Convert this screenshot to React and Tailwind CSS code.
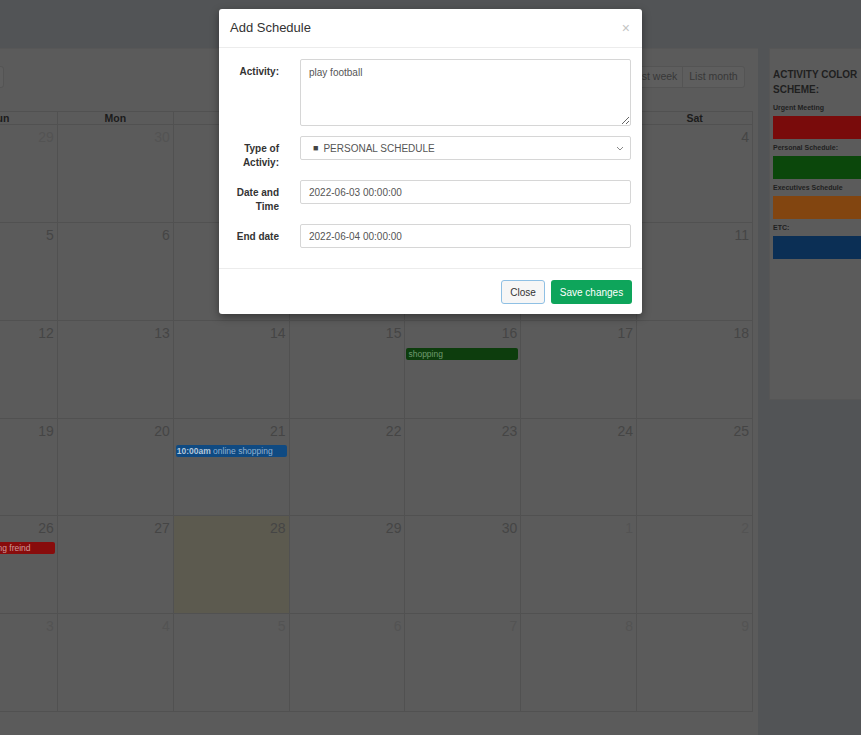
const weeks = [
  [[29, 0], [30, 0], [31, 0], [1, 1], [2, 1], [3, 1], [4, 1]],
  [[5, 1], [6, 1], [7, 1], [8, 1], [9, 1], [10, 1], [11, 1]],
  [[12, 1], [13, 1], [14, 1], [15, 1], [16, 1], [17, 1], [18, 1]],
  [[19, 1], [20, 1], [21, 1], [22, 1], [23, 1], [24, 1], [25, 1]],
  [[26, 1], [27, 1], [28, 1], [29, 1], [30, 1], [1, 0], [2, 0]],
  [[3, 0], [4, 0], [5, 0], [6, 0], [7, 0], [8, 0], [9, 0]],
];

const days = ["Sun", "Mon", "Tue", "Wed", "Thu", "Fri", "Sat"];

function EventBar({ r, c }) {
  if (r === 2 && c === 4)
    return (
      <div className="mt-[7px] ml-[1px] mr-[2px] h-[12px] rounded-[2px] bg-[#0d3d0d] px-[2px] text-[8.5px] leading-[12px] text-[#6f9a6f] whitespace-nowrap overflow-hidden">
        shopping
      </div>
    );
  if (r === 3 && c === 2)
    return (
      <div className="mt-[6px] ml-[2px] mr-[2px] h-[12px] rounded-[2px] bg-[#0f4a82] px-[1px] text-[8.5px] leading-[12px] text-[#8fb0d0] whitespace-nowrap overflow-hidden">
        <span className="font-bold text-[#b4c7da]">10:00am</span> online shopping
      </div>
    );
  if (r === 4 && c === 0)
    return (
      <div className="mt-[6px] ml-[2px] mr-[2px] h-[12px] rounded-[2px] bg-[#880c0c] px-[1px] text-[8.5px] leading-[12px] text-[#cf9a9a] whitespace-nowrap overflow-hidden">
        <span className="font-bold">9:00am</span> meeting freind
      </div>
    );
  return null;
}

function Field({ label, children }) {
  return (
    <div className="flex gap-[21px] mb-[10px]">
      <div className="w-[49px] shrink-0 text-right pt-[6px] text-[10px] font-bold leading-[14px] text-[#333]">
        {label}
      </div>
      <div className="flex-1">{children}</div>
    </div>
  );
}

export default function App() {
  return (
    <div className="relative w-[861px] h-[735px] overflow-hidden bg-[#525456] font-['Liberation_Sans',Arial,sans-serif]">
      <div className="flex pt-[48px]">
        {/* calendar card */}
        <div className="ml-[-64px] w-[822px] shrink-0 h-[720px] bg-[#5b5b5b] border-t border-[#575757] pt-[17px] px-[5px]">
          <div className="flex items-center justify-between h-[22px]">
            <div className="w-[63px] h-[22px] rounded-[3px] border border-[#545454] bg-[#5e5e5e]"></div>
            <div className="text-[16px] text-[#3a3a3a]">June 2022</div>
            <div className="flex mr-[8px] h-[22px] rounded-[3px] border border-[#545454] bg-[#5e5e5e] text-[10.5px] text-[#383838]">
              <div className="w-[54px] flex items-center justify-center border-r border-[#545454]">List week</div>
              <div className="w-[61px] flex items-center justify-center">List month</div>
            </div>
          </div>
          <div className="mt-[23px] w-[812px]">
            <div className="grid grid-cols-7 h-[14px] border-t border-l border-b border-[#515151]">
              {days.map((d) => (
                <div key={d} className="border-r border-[#515151] text-center text-[10.5px] font-bold leading-[12px] text-[#1c1c1c]">
                  {d}
                </div>
              ))}
            </div>
            <div className="grid grid-cols-7 grid-rows-6 h-[587px] border-l border-[#515151]">
              {weeks.map((w, r) =>
                w.map(([n, cur], c) => (
                  <div
                    key={r + "-" + c}
                    className={
                      "border-r border-b border-[#515151] min-w-0 " +
                      (r === 4 && c === 2 ? "bg-[#5c5a4f]" : "")
                    }
                  >
                    <div
                      className={
                        "text-right pr-[3px] pt-[4px] text-[14px] leading-[16px] " +
                        (cur ? "text-[#454545]" : "text-[#535353]")
                      }
                    >
                      {n}
                    </div>
                    <EventBar r={r} c={c} />
                  </div>
                ))
              )}
            </div>
          </div>
        </div>
        {/* sidebar */}
        <div className="ml-[11px] w-[110px] shrink-0 h-[352px] bg-[#5b5b5b] border border-[#565656] pt-[18px] px-[3px]">
          <div className="text-[10px] font-bold leading-[15px] text-[#1f1f1f]">
            ACTIVITY COLOR
            <br />
            SCHEME:
          </div>
          <div className="mt-[6px] text-[7px] font-bold leading-[9px] text-[#1f1f1f]">Urgent Meeting</div>
          <div className="mt-[4px] h-[23px] bg-[#790b0b]"></div>
          <div className="mt-[4px] text-[7px] font-bold leading-[9px] text-[#1f1f1f]">Personal Schedule:</div>
          <div className="mt-[4px] h-[23px] bg-[#0b470b]"></div>
          <div className="mt-[4px] text-[7px] font-bold leading-[9px] text-[#1f1f1f]">Executives Schedule</div>
          <div className="mt-[4px] h-[23px] bg-[#824510]"></div>
          <div className="mt-[4px] text-[7px] font-bold leading-[9px] text-[#1f1f1f]">ETC:</div>
          <div className="mt-[4px] h-[23px] bg-[#0b2f55]"></div>
        </div>
      </div>

      {/* modal */}
      <div className="absolute left-[219px] top-[9px] w-[423px] rounded-[3px] bg-white shadow-[0_3px_9px_rgba(0,0,0,0.4)]">
        <div className="flex items-center justify-between h-[39px] border-b border-[#ececec] pl-[11px] pr-[12px]">
          <div className="text-[13px] text-[#333]">Add Schedule</div>
          <div className="text-[14px] leading-none text-[#c4c4c4]">×</div>
        </div>
        <div className="pt-[11px] pb-[10px] px-[11px]">
          <Field label="Activity:">
            <textarea
              readOnly
              value="play football"
              className="block w-full h-[67px] rounded-[2px] border border-[#d6d6d6] px-[8px] pt-[6px] text-[10px] leading-[14px] text-[#555] outline-none font-['Liberation_Sans',Arial,sans-serif]"
            />
          </Field>
          <Field label="Type of Activiy:">
            <div className="flex items-center justify-between h-[24px] rounded-[2px] border border-[#d6d6d6] pl-[12px] pr-[6px] text-[10px] text-[#555]">
              <div className="flex items-center">
                <span className="text-[9px] leading-none text-[#444] mr-[5px]">■</span>
                <span>PERSONAL SCHEDULE</span>
              </div>
              <svg width="8" height="5" viewBox="0 0 8 5" fill="none">
                <path d="M1 1l3 3 3-3" stroke="#888" strokeWidth="1" />
              </svg>
            </div>
          </Field>
          <Field label="Date and Time">
            <div className="flex items-center h-[24px] rounded-[2px] border border-[#d6d6d6] px-[8px] text-[10px] text-[#555]">
              2022-06-03 00:00:00
            </div>
          </Field>
          <Field label="End date">
            <div className="flex items-center h-[24px] rounded-[2px] border border-[#d6d6d6] px-[8px] text-[10px] text-[#555]">
              2022-06-04 00:00:00
            </div>
          </Field>
        </div>
        <div className="flex justify-end gap-[6px] border-t border-[#ececec] pt-[11px] pb-[10px] pr-[10px]">
          <div className="w-[44px] h-[24px] flex items-center justify-center rounded-[3px] border border-[#8fc0e4] bg-[#f6f6f6] text-[10px] text-[#333]">
            Close
          </div>
          <div className="w-[81px] h-[24px] flex items-center justify-center rounded-[3px] bg-[#0ea55b] text-[10px] text-white">
            Save changes
          </div>
        </div>
      </div>
    </div>
  );
}
